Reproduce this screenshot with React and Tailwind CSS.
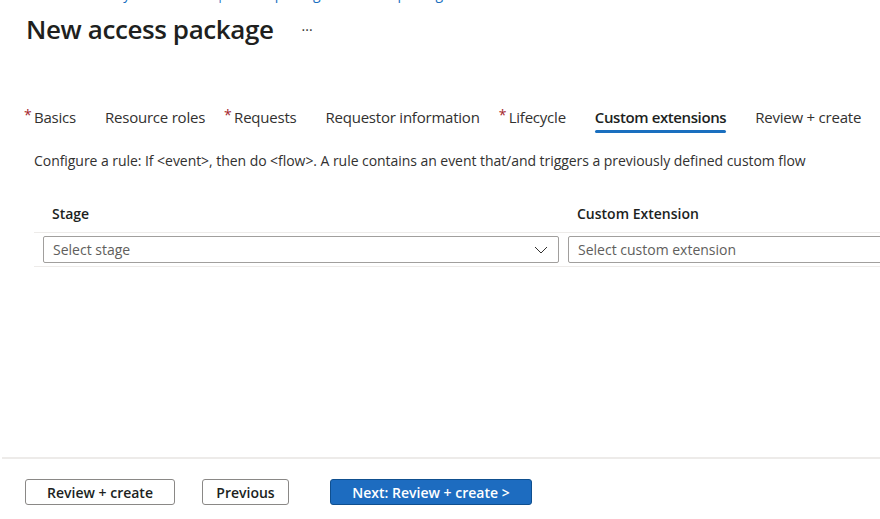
import React from "react";

const Tab = ({ label, req, active }) => (
  <div className="relative flex items-start">
    {req && <span className="absolute -left-[10px] top-[2px] text-[#a4262c] text-[14px] leading-none">*</span>}
    <span className={active ? "font-semibold text-[#201f1e] tracking-[-0.4px]" : "text-[#323130]"}>{label}</span>
    {active && <div className="absolute left-0 right-0 top-[24px] h-[3px] bg-[#1a6fbf] rounded-sm" />}
  </div>
);

export default function App() {
  return (
    <div className="w-[880px] h-[519px] bg-white overflow-hidden flex flex-col" style={{ fontFamily: '"Open Sans", "Noto Sans", sans-serif' }}>
      <div className="h-[4px] overflow-hidden relative">
        <div className="absolute left-[26px] top-[-16px] text-[14px] leading-[20px] text-[#1a6fbf] whitespace-nowrap">
          Home &gt; Identity Governance | Access packages &gt; Access packages
        </div>
      </div>
      <div className="flex items-center pl-[26px] mt-[5px] h-[40px]">
        <h1 className="text-[26px] font-semibold text-[#201f1e] tracking-[-0.4px]">New access package</h1>
        <span className="ml-[28px] text-[14px] text-[#323130] mt-[0px]">···</span>
      </div>
      <div className="flex items-center gap-[29px] pl-[34px] mt-[58px] text-[15px] h-[20px] tracking-[-0.22px]">
        <Tab label="Basics" req />
        <Tab label="Resource roles" />
        <Tab label="Requests" req />
        <Tab label="Requestor information" />
        <Tab label="Lifecycle" req />
        <Tab label="Custom extensions" active />
        <Tab label="Review + create" />
      </div>
      <div className="pl-[34px] mt-[23px] text-[14px] text-[#323130] whitespace-nowrap tracking-[-0.05px]">
        Configure a rule: If &lt;event&gt;, then do &lt;flow&gt;. A rule contains an event that/and triggers a previously defined custom flow
      </div>
      <div className="ml-[34px] mt-[24px]">
        <div className="flex h-[38px] items-center border-b border-[#edebe9] text-[14px] font-semibold text-[#201f1e]">
          <div className="w-[534px] shrink-0 pl-[18px]">Stage</div>
          <div className="pl-[9px]">Custom Extension</div>
        </div>
        <div className="flex items-center gap-[9px] h-[34px] pl-[9px] border-b border-[#edebe9]">
          <div className="w-[516px] shrink-0 h-[27px] border border-[#a19f9d] rounded-[2px] flex items-center justify-between pl-[9px] pr-[10px] text-[14px] text-[#605e5c]">
            <span>Select stage</span>
            <svg width="14" height="8" viewBox="0 0 14 8" fill="none"><path d="M1 1l6 6 6-6" stroke="#323130" strokeWidth="1" /></svg>
          </div>
          <div className="w-[330px] shrink-0 h-[27px] border border-[#a19f9d] rounded-[2px] flex items-center pl-[9px] text-[14px] text-[#605e5c]">
            <span>Select custom extension</span>
          </div>
        </div>
      </div>
      <div className="flex-1" />
      <div className="ml-[2px] border-t-2 border-[#edebe9] h-[62px] flex items-center pl-[23px] pt-[6px] gap-[27px] text-[14px]">
        <button className="w-[150px] h-[26px] border border-[#8a8886] rounded-[3px] text-[#201f1e] font-semibold">Review + create</button>
        <button className="w-[87px] h-[26px] border border-[#8a8886] rounded-[3px] text-[#201f1e] font-semibold">Previous</button>
        <button className="ml-[14px] w-[202px] h-[26px] border border-[#0f4f8f] rounded-[3px] bg-[#1d6cc0] text-white font-semibold">Next: Review + create &gt;</button>
      </div>
    </div>
  );
}
